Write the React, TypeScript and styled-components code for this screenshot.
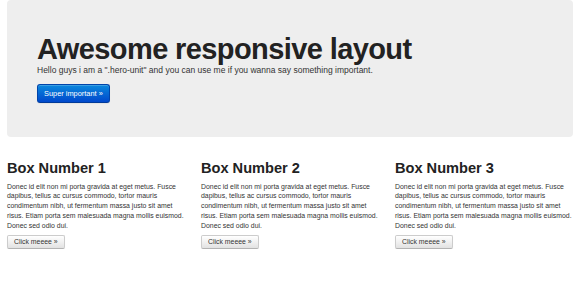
import React from "react";
import styled, { createGlobalStyle } from "styled-components";

const GlobalStyle = createGlobalStyle`
  html, body {
    margin: 0;
    padding: 0;
    background: #ffffff;
  }
  body {
    font-family: "Liberation Sans", Arial, Helvetica, sans-serif;
    color: #333333;
    -webkit-font-smoothing: antialiased;
  }
`;

const Container = styled.div`
  width: 566px;
  margin: 0 auto;
`;

const Hero = styled.div`
  background: #eeeeee;
  border-radius: 4px;
  padding: 35px 30px 34px;
  margin-bottom: 21px;
`;

const HeroTitle = styled.h1`
  margin: 0;
  font-size: 29px;
  line-height: 29px;
  font-weight: bold;
  letter-spacing: -0.6px;
  color: #222222;
`;

const HeroText = styled.p`
  margin: 1px 0 7px;
  font-size: 8.5px;
  line-height: 10px;
  color: #333333;
`;

const Button = styled.a<{ $primary?: boolean; $large?: boolean }>`
  display: inline-block;
  box-sizing: border-box;
  text-decoration: none;
  cursor: pointer;
  font-family: inherit;
  border-radius: ${(p) => (p.$large ? "3px" : "2px")};
  height: ${(p) => (p.$large ? "19px" : "14px")};
  padding: 0 6px;
  font-size: ${(p) => (p.$large ? "7.4px" : "6.9px")};
  line-height: ${(p) => (p.$large ? "17px" : "12px")};
  color: ${(p) => (p.$primary ? "#ffffff" : "#333333")};
  background: ${(p) =>
    p.$primary
      ? "linear-gradient(to bottom, #0a88dd, #0048cc)"
      : "linear-gradient(to bottom, #ffffff, #e2e2e2)"};
  border: 1px solid ${(p) => (p.$primary ? "#0044aa" : "#cccccc")};
  border-bottom-color: ${(p) => (p.$primary ? "#003a99" : "#b3b3b3")};
  box-shadow: inset 0 1px 0 rgba(255, 255, 255, 0.2),
    0 1px 1px rgba(0, 0, 0, 0.05);
  white-space: nowrap;
`;

const Row = styled.div`
  display: grid;
  grid-template-columns: repeat(3, 179px);
  column-gap: 15px;
`;

const Box = styled.div`
  display: flex;
  flex-direction: column;
  align-items: flex-start;
`;

const BoxTitle = styled.h2`
  margin: 0;
  font-size: 14.6px;
  line-height: 20px;
  font-weight: bold;
  color: #222222;
`;

const BoxText = styled.p`
  margin: 3.5px 0 4.5px;
  font-size: 6.9px;
  line-height: 9.8px;
  color: #333333;
`;

const boxes = [1, 2, 3];

export default function App() {
  return (
    <>
      <GlobalStyle />
      <Container>
        <Hero>
          <HeroTitle>Awesome responsive layout</HeroTitle>
          <HeroText>
            Hello guys i am a ".hero-unit" and you can use me if you wanna say
            something important.
          </HeroText>
          <Button $primary $large>
            Super important »
          </Button>
        </Hero>
        <Row>
          {boxes.map((n) => (
            <Box key={n}>
              <BoxTitle>Box Number {n}</BoxTitle>
              <BoxText>
                Donec id elit non mi porta gravida at eget metus. Fusce
                dapibus, tellus ac cursus commodo, tortor mauris condimentum
                nibh, ut fermentum massa justo sit amet risus. Etiam porta sem
                malesuada magna mollis euismod. Donec sed odio dui.
              </BoxText>
              <Button>Click meeee »</Button>
            </Box>
          ))}
        </Row>
      </Container>
    </>
  );
}
